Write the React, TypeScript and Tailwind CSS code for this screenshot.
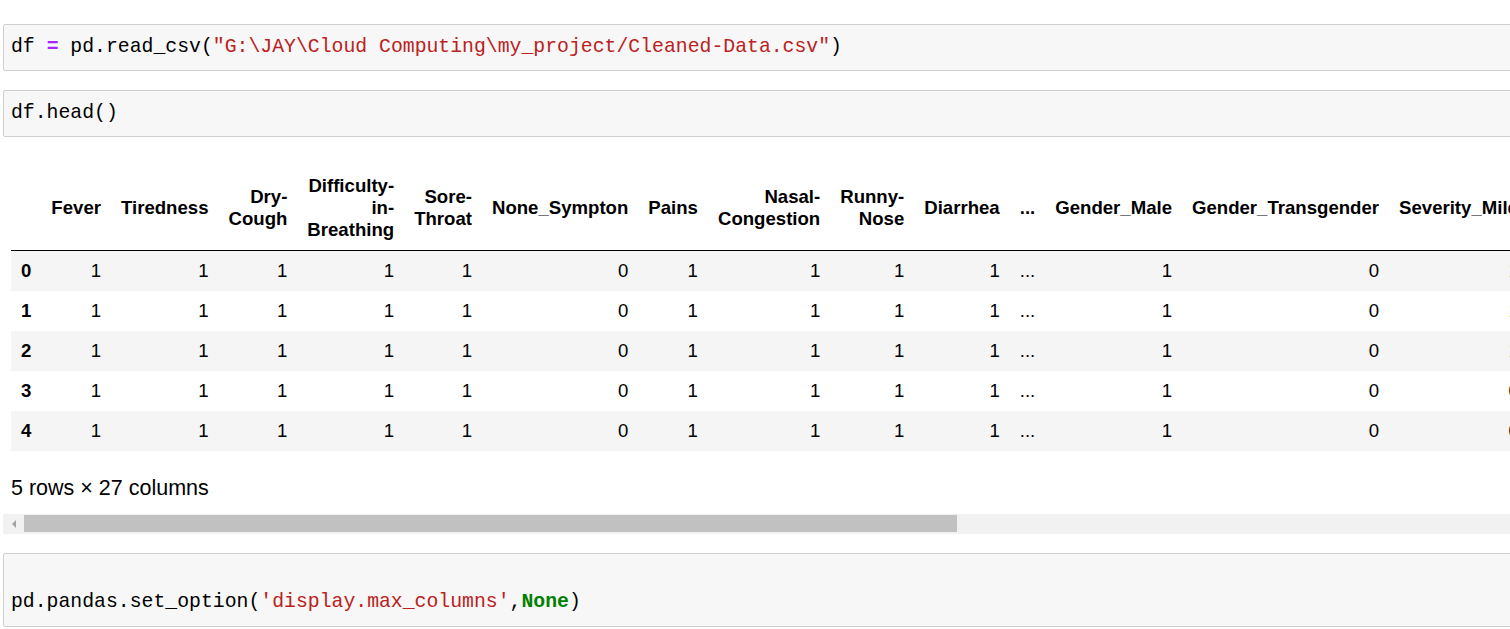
import React from "react";

const mono = { fontFamily: '"Liberation Mono", "DejaVu Sans Mono", monospace' };

const headers: React.ReactNode[] = [
  "Fever",
  "Tiredness",
  <>Dry-<br />Cough</>,
  <>Difficulty-<br />in-<br />Breathing</>,
  <>Sore-<br />Throat</>,
  "None_Sympton",
  "Pains",
  <>Nasal-<br />Congestion</>,
  <>Runny-<br />Nose</>,
  "Diarrhea",
  "...",
  "Gender_Male",
  "Gender_Transgender",
  "Severity_Mild",
];

const baseRow = ["1", "1", "1", "1", "1", "0", "1", "1", "1", "1", "...", "1", "0"];
const severity = ["1", "1", "1", "0", "0"];

export default function App() {
  return (
    <div
      className="w-[1510px] h-[629px] overflow-hidden bg-white text-black"
      style={{ fontFamily: '"Liberation Sans", Arial, sans-serif' }}
    >
      <div className="pl-[3px] pt-[24px]">
        <div
          className="w-[1540px] h-[47px] border border-[#cfcfcf] rounded-[2px] bg-[#f7f7f7] pl-[7px] flex items-center text-[19.8px] leading-[25px]"
          style={mono}
        >
          <span className="whitespace-pre">
            df <span className="text-[#aa22ff] font-bold">=</span> pd.read_csv(
            <span className="text-[#ba2121]">"G:\JAY\Cloud Computing\my_project/Cleaned-Data.csv"</span>)
          </span>
        </div>

        <div
          className="mt-[19px] w-[1540px] h-[47px] border border-[#cfcfcf] rounded-[2px] bg-[#f7f7f7] pl-[7px] flex items-center text-[19.8px] leading-[25px]"
          style={mono}
        >
          <span className="whitespace-pre">df.head()</span>
        </div>

        <div className="mt-[29px] pl-[8px]">
          <table className="border-collapse text-[18.6px] whitespace-nowrap">
            <thead>
              <tr className="border-b border-black">
                <th className="px-[10px] py-[9px] leading-[22px]"></th>
                {headers.map((h, i) => (
                  <th key={i} className="px-[10px] py-[9px] leading-[22px] text-right align-middle font-bold">
                    {h}
                  </th>
                ))}
              </tr>
            </thead>
            <tbody>
              {[0, 1, 2, 3, 4].map((r) => (
                <tr key={r} className={r % 2 === 0 ? "h-[40px] bg-[#f5f5f5]" : "h-[40px] bg-white"}>
                  <th className="px-[10px] text-left font-bold">{r}</th>
                  {[...baseRow, severity[r]].map((v, i) => (
                    <td key={i} className="px-[10px] text-right align-middle">
                      {v}
                    </td>
                  ))}
                </tr>
              ))}
            </tbody>
          </table>
        </div>

        <div className="pl-[8px] mt-[25px] text-[21.5px] leading-[24px]">5 rows × 27 columns</div>

        <div className="mt-[14px] w-[1540px] h-[20px] bg-[#f1f1f1] flex items-center">
          <div className="w-[21px] h-full flex items-center justify-center">
            <svg width="6" height="8" viewBox="0 0 6 8">
              <path d="M5 0 L1 4 L5 8 Z" fill="#a3a3a3" />
            </svg>
          </div>
          <div className="w-[933px] h-[17px] bg-[#c1c1c1]"></div>
        </div>

        <div
          className="mt-[19px] w-[1540px] h-[74px] border border-[#cfcfcf] rounded-[2px] bg-[#f7f7f7] pl-[7px] pt-[11px] text-[19.8px] leading-[25px]"
          style={mono}
        >
          <div className="h-[25px]"></div>
          <div className="whitespace-pre">
            pd.pandas.set_option(<span className="text-[#ba2121]">'display.max_columns'</span>,
            <span className="text-[#008000] font-bold">None</span>)
          </div>
        </div>
      </div>
    </div>
  );
}
